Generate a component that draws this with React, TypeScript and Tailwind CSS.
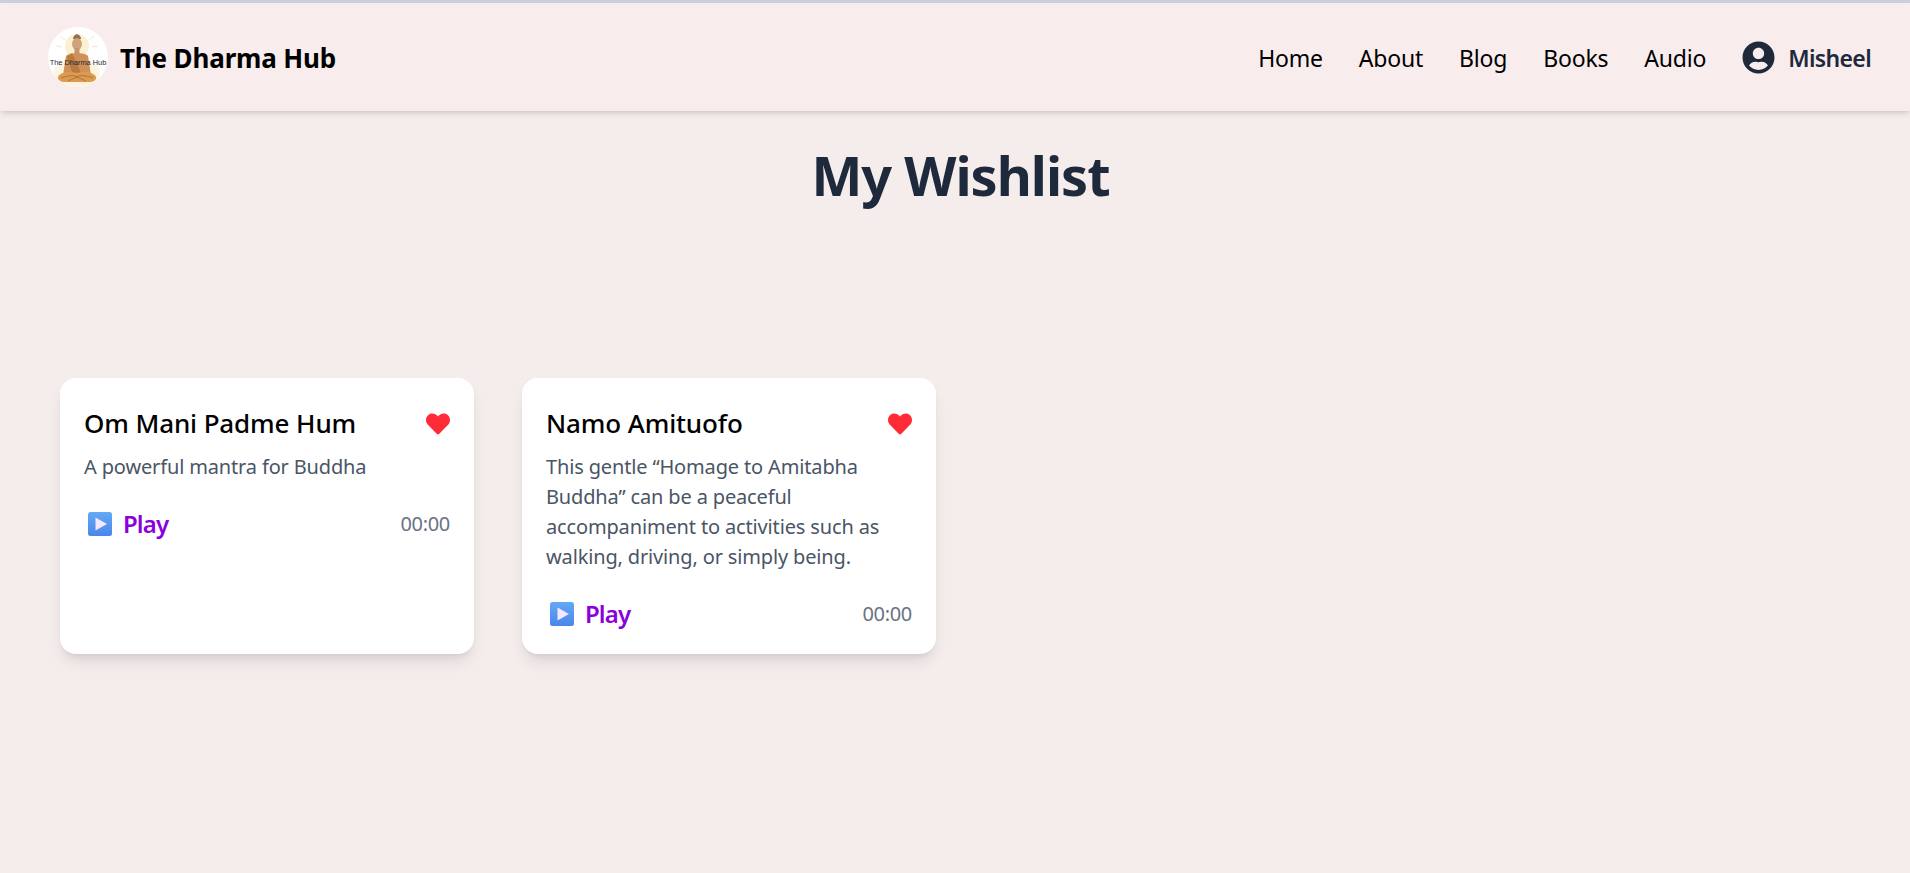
import React from "react";
import { FaHeart, FaUserCircle } from "react-icons/fa";

const navLinks = ["Home", "About", "Blog", "Books", "Audio"];

const tracks = [
  { title: "Om Mani Padme Hum", text: "A powerful mantra for Buddha" },
  {
    title: "Namo Amituofo",
    text: "This gentle “Homage to Amitabha Buddha” can be a peaceful accompaniment to activities such as walking, driving, or simply being.",
  },
];

const Logo = () => (
  <div className="h-[60px] w-[60px] shrink-0 overflow-hidden rounded-full bg-white">
    <svg viewBox="0 0 60 60" className="h-full w-full">
      <ellipse cx="29" cy="46" rx="23" ry="15" fill="#fdf4e0" />
      <circle cx="29" cy="19" r="12" fill="#fbf0d2" />
      <path d="M12 9l5 4M46 9l-5 4M8 19l6 1M50 19l-6 1" stroke="#f1e8d2" strokeWidth="1" fill="none" />
      <path d="M25 12c0-3 2-4 4-5 2 1 4 2 4 5z" fill="#94704f" />
      <ellipse cx="29" cy="17" rx="5" ry="6" fill="#cfa27e" />
      <rect x="26.5" y="21" width="5" height="5" fill="#c4946e" />
      <path d="M18 29c3-4 19-4 22 0l3 19H15z" fill="#cf9157" />
      <path d="M24 26l10 22h-9l-6-18z" fill="#b97a3e" />
      <path d="M10 50c2-5 12-6 19-4 7-2 17-1 19 4 1 3-3 5-7 5H17c-4 0-8-2-7-5z" fill="#dc9a52" />
      <path d="M13 51c8-3 14-3 16-1 2-2 8-2 16 1M20 54l9-4 9 4" stroke="#a96a30" strokeWidth="0.8" fill="none" />
      <text x="30" y="37.5" textAnchor="middle" fontSize="7.4" fill="#232733" fontFamily="Liberation Sans, sans-serif">
        The Dharma Hub
      </text>
    </svg>
  </div>
);

const PlayIcon = () => (
  <svg viewBox="0 0 24 24" className="h-6 w-6 shrink-0">
    <defs>
      <linearGradient id="playBg" x1="0" y1="0" x2="0" y2="1">
        <stop offset="0" stopColor="#63a9f5" />
        <stop offset="1" stopColor="#4a86ea" />
      </linearGradient>
    </defs>
    <rect width="24" height="24" rx="2.5" fill="url(#playBg)" />
    <path d="M7.5 5.5L19 12 7.5 18.5z" fill="#f3e8ff" />
  </svg>
);

const TrackCard = ({ title, text }: { title: string; text: string }) => (
  <div className="flex h-[276px] flex-col rounded-2xl bg-white p-6 shadow-lg">
    <div className="flex h-9 items-start justify-between">
      <h2 className="mt-[3px] text-[26px] leading-9 font-medium tracking-[-0.12px] text-black">{title}</h2>
      <FaHeart className="mt-2.5 text-[24px] text-[#ff2c38]" />
    </div>
    <p className="mt-3.5 text-[20px] leading-[30px] tracking-[-0.15px] text-gray-600">{text}</p>
    <div className="mt-6 flex items-center justify-between">
      <button className="flex h-9 items-center pl-1 text-[24px] font-semibold tracking-[-0.9px] text-[#8b00dc]">
        <PlayIcon />
        <span className="ml-[11px]">Play</span>
      </button>
      <span className="text-[20px] tracking-[-0.3px] text-gray-500">00:00</span>
    </div>
  </div>
);

export default function App() {
  return (
    <div className="min-h-screen bg-[#f5ecec] font-['Noto_Sans',sans-serif]">
      <div className="h-[3px] bg-[#c8cfdf]" />
      <nav className="flex h-[108px] items-center justify-between bg-[#f8ecec] pr-[39px] pl-12 shadow-md">
        <div className="flex items-center gap-3">
          <Logo />
          <span className="mt-0.5 text-[26px] font-bold tracking-[-0.15px] text-black">The Dharma Hub</span>
        </div>
        <div className="flex items-center gap-9">
          {navLinks.map((link) => (
            <a key={link} className="mt-0.5 text-[23px] tracking-[-0.2px] text-black">
              {link}
            </a>
          ))}
          <div className="flex items-center gap-[13px]">
            <FaUserCircle className="text-[33px] text-[#1e293b]" />
            <span className="mt-0.5 text-[23px] font-semibold tracking-[-0.65px] text-[#1e293b]">Misheel</span>
          </div>
        </div>
      </nav>
      <h1 className="mt-7 pl-[11px] text-center text-[54px] leading-[72px] font-bold tracking-[-1px] text-[#1e293b]">My Wishlist</h1>
      <div className="mt-[167px] grid grid-cols-[repeat(4,414px)] gap-12 px-[60px]">
        {tracks.map((t) => (
          <TrackCard key={t.title} title={t.title} text={t.text} />
        ))}
      </div>
    </div>
  );
}
